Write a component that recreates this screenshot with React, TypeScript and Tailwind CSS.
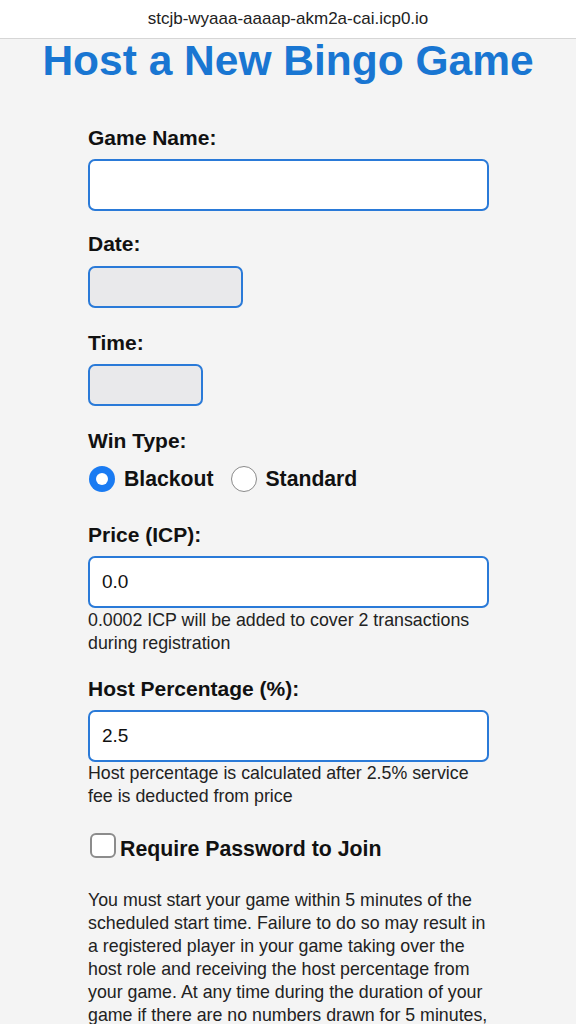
import { useState } from "react";

const labelCls = "block text-[21px] leading-[24px] font-bold text-[#111]";
const inputCls =
  "block border-2 border-[#2a7ad8] rounded-[7px] outline-none text-[19px] text-[#111] px-[12px]";
const helpCls = "text-[17.8px] leading-[23px] text-[#222]";

function Radio({ checked }: { checked: boolean }) {
  return checked ? (
    <span className="w-[26px] h-[26px] rounded-full bg-[#1a7bf2] flex items-center justify-center shrink-0">
      <span className="w-[12px] h-[12px] rounded-full bg-white" />
    </span>
  ) : (
    <span className="w-[26px] h-[26px] rounded-full bg-white border-[1.5px] border-[#8a8a8a] shrink-0" />
  );
}

export default function App() {
  const [winType, setWinType] = useState("blackout");
  const [price, setPrice] = useState("0.0");
  const [hostPct, setHostPct] = useState("2.5");
  const [needPassword, setNeedPassword] = useState(false);

  return (
    <div className="min-h-[1024px] bg-[#f4f4f4] font-['Liberation_Sans',Arial,sans-serif]">
      <div className="h-[39px] bg-white border-b border-[#d6d6d6] flex items-center justify-center text-[17px] text-[#222]">
        stcjb-wyaaa-aaaap-akm2a-cai.icp0.io
      </div>

      <h1 className="text-center text-[42.5px] leading-[43px] font-bold text-[#1976d2]">
        Host a New Bingo Game
      </h1>

      <form className="pl-[88px] pr-[87px]" onSubmit={(e) => e.preventDefault()}>
        <label className={`${labelCls} mt-[44px]`}>Game Name:</label>
        <input type="text" className={`${inputCls} mt-[9px] w-full h-[52px] bg-white`} />

        <label className={`${labelCls} mt-[21px]`}>Date:</label>
        <input type="text" className={`${inputCls} mt-[10px] w-[155px] h-[42px] bg-[#e9e9eb]`} />

        <label className={`${labelCls} mt-[23px]`}>Time:</label>
        <input type="text" className={`${inputCls} mt-[9px] w-[115px] h-[42px] bg-[#e9e9eb]`} />

        <label className={`${labelCls} mt-[23px]`}>Win Type:</label>
        <div className="mt-[13px] flex items-center h-[26px]">
          <button type="button" className="flex items-center ml-[1px]" onClick={() => setWinType("blackout")}>
            <Radio checked={winType === "blackout"} />
            <span className="ml-[9px] text-[21.2px] font-bold text-[#111]">Blackout</span>
          </button>
          <button type="button" className="flex items-center ml-[18px]" onClick={() => setWinType("standard")}>
            <Radio checked={winType === "standard"} />
            <span className="ml-[8px] text-[21.2px] font-bold text-[#111]">Standard</span>
          </button>
        </div>

        <label className={`${labelCls} mt-[31px]`}>Price (ICP):</label>
        <input
          type="text"
          value={price}
          onChange={(e) => setPrice(e.target.value)}
          className={`${inputCls} mt-[9px] w-full h-[52px] bg-white`}
        />
        <p className={`${helpCls} mt-[1px]`}>
          0.0002 ICP will be added to cover 2 transactions during registration
        </p>

        <label className={`${labelCls} mt-[22px]`}>Host Percentage (%):</label>
        <input
          type="text"
          value={hostPct}
          onChange={(e) => setHostPct(e.target.value)}
          className={`${inputCls} mt-[9px] w-full h-[52px] bg-white`}
        />
        <p className={helpCls}>
          Host percentage is calculated after 2.5% service fee is deducted from price
        </p>

        <div className="mt-[25px] flex items-start">
          <button
            type="button"
            onClick={() => setNeedPassword(!needPassword)}
            className="ml-[2px] w-[26px] h-[25px] rounded-[6px] border-2 border-[#8c8c8c] bg-white shrink-0"
          />
          <span className="mt-[4px] ml-[4px] text-[21.3px] leading-[24px] font-bold text-[#111]">
            Require Password to Join
          </span>
        </div>

        <p className={`${helpCls} mt-[28px] whitespace-nowrap`}>
          You must start your game within 5 minutes of the
          <br />
          scheduled start time. Failure to do so may result in
          <br />
          a registered player in your game taking over the
          <br />
          host role and receiving the host percentage from
          <br />
          your game. At any time during the duration of your
          <br />
          game if there are no numbers drawn for 5 minutes,
        </p>
      </form>
    </div>
  );
}
